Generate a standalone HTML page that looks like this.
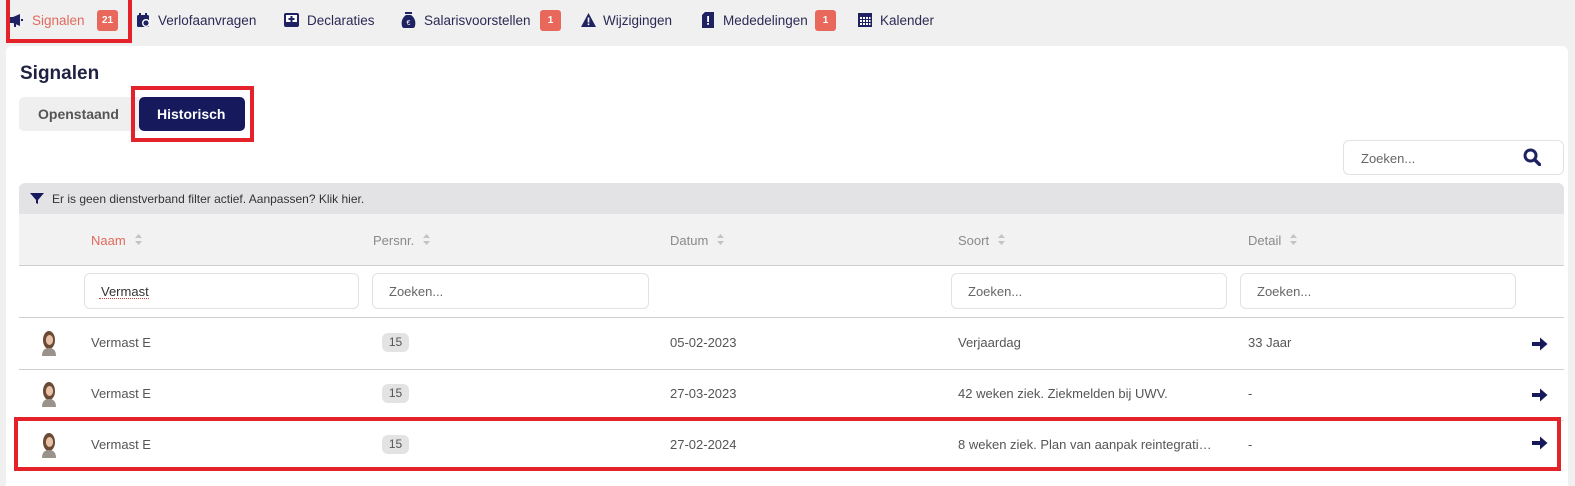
<!DOCTYPE html>
<html><head><meta charset="utf-8">
<style>
*{box-sizing:border-box;margin:0;padding:0}
body{width:1575px;height:478px;background:#f0f0f0;font-family:"Liberation Sans",sans-serif;position:relative;overflow:hidden;color:#555}
.a{position:absolute}
.nav{font-size:13.5px;color:#2a2a55;top:13px;white-space:nowrap}
.badge{position:absolute;top:10px;height:21px;background:#e8685b;color:#fff;font-size:10px;font-weight:bold;border-radius:3px;text-align:center;line-height:21px}
.card{left:6px;top:46px;width:1562px;height:440px;background:#fff;border-radius:6px 6px 0 0}
.th{font-size:13px;color:#8a8a8a;top:233px;white-space:nowrap}
.sort{display:inline-block;margin-left:9px;vertical-align:0px}
.inp{height:36px;top:273px;border:1px solid #e2e2e2;border-radius:6px;font-size:13px;color:#666;padding:10px 0 0 16px}
.row{font-size:13px;color:#555}
.line{height:1px;background:#cfcfcf;left:19px;width:1545px}
.num{width:27px;height:19px;background:#e3e3e3;border-radius:6px;font-size:12px;text-align:center;line-height:19px;color:#555}
.red{border:4px solid #e3222a}
</style></head><body>
<svg width="0" height="0" style="position:absolute"><defs>
<g id="av"><ellipse cx="9" cy="10" rx="6" ry="9" fill="#6b4a36"/><ellipse cx="9.5" cy="10" rx="3.6" ry="5" fill="#e8c2a8"/><path d="M2 26c0-6 3-8 7-8s7 2 7 8z" fill="#9a938c"/></g>
<g id="so"><path d="M3.5 0L7 4H0z" fill="#c4c4c4"/><path d="M3.5 11L7 7H0z" fill="#c4c4c4"/></g>
<g id="ar"><path d="M0 5h8V0.5l7.5 6.5-7.5 6.5V9H0z" fill="#161a5c"/></g>
</defs></svg>
<!-- nav -->
<svg class="a" style="left:10px;top:14px" width="14" height="13" viewBox="0 0 14 13"><path d="M0 3h3v6H0zM3 3l7-3v12L3 9z" fill="#1e2262"/><rect x="4" y="9" width="2" height="4" fill="#1e2262"/><rect x="11" y="5" width="2" height="2" fill="#1e2262"/></svg>
<div class="a nav" style="left:32px;color:#e06a5c">Signalen</div>
<div class="badge" style="left:97px;width:21px">21</div>
<div class="a red" style="left:6px;top:0;width:126px;height:43px;border-top:none"></div>
<svg class="a" style="left:137px;top:13px" width="14" height="15" viewBox="0 0 14 15"><rect x="0" y="2" width="12" height="12" rx="1.5" fill="#1e2262"/><rect x="2" y="0" width="2" height="4" fill="#1e2262"/><rect x="8" y="0" width="2" height="4" fill="#1e2262"/><circle cx="9" cy="10" r="4" fill="#fff"/><circle cx="9" cy="10" r="2.6" fill="#1e2262"/></svg>
<div class="a nav" style="left:158px">Verlofaanvragen</div>
<svg class="a" style="left:284px;top:13px" width="15" height="14" viewBox="0 0 15 14"><rect x="0" y="0" width="15" height="14" rx="2" fill="#1e2262"/><rect x="2" y="2" width="11" height="7" fill="#fff"/><path d="M6.5 3h2v2h2v2h-2v2h-2V7h-2V5h2z" fill="#1e2262"/></svg>
<div class="a nav" style="left:307px">Declaraties</div>
<svg class="a" style="left:401px;top:12px" width="15" height="16" viewBox="0 0 15 16"><rect x="4" y="0" width="7" height="2" fill="#1e2262"/><path d="M5 3h5C14 6 15 10 14 14c0 1-1 2-2 2H3c-1 0-2-1-2-2C0 10 1 6 5 3z" fill="#1e2262"/><text x="7.5" y="13" font-size="7" fill="#fff" text-anchor="middle" font-family="Liberation Sans">€</text></svg>
<div class="a nav" style="left:424px">Salarisvoorstellen</div>
<div class="badge" style="left:540px;width:21px">1</div>
<svg class="a" style="left:581px;top:13px" width="15" height="14" viewBox="0 0 15 14"><path d="M7.5 0L15 14H0z" fill="#1e2262"/><rect x="6.7" y="4.5" width="1.6" height="5" fill="#fff"/><rect x="6.7" y="10.5" width="1.6" height="1.6" fill="#fff"/></svg>
<div class="a nav" style="left:603px">Wijzigingen</div>
<svg class="a" style="left:702px;top:12px" width="12" height="16" viewBox="0 0 12 16"><path d="M3 0h9v16H0V3z" fill="#1e2262"/><rect x="5.2" y="4" width="1.8" height="6" fill="#fff"/><rect x="5.2" y="11" width="1.8" height="1.8" fill="#fff"/></svg>
<div class="a nav" style="left:723px">Mededelingen</div>
<div class="badge" style="left:815px;width:21px">1</div>
<svg class="a" style="left:858px;top:13px" width="14" height="14" viewBox="0 0 14 14"><rect width="14" height="14" fill="#1e2262"/><g fill="#fff"><rect x="2" y="4" width="2" height="2"/><rect x="5" y="4" width="2" height="2"/><rect x="8" y="4" width="2" height="2"/><rect x="11" y="4" width="1.5" height="2"/><rect x="2" y="7" width="2" height="2"/><rect x="5" y="7" width="2" height="2"/><rect x="8" y="7" width="2" height="2"/><rect x="11" y="7" width="1.5" height="2"/><rect x="2" y="10" width="2" height="2"/><rect x="5" y="10" width="2" height="2"/><rect x="8" y="10" width="2" height="2"/><rect x="11" y="10" width="1.5" height="2"/></g></svg>
<div class="a nav" style="left:880px">Kalender</div>

<div class="a card"></div>
<div class="a" style="left:20px;top:63px;font-size:19px;font-weight:bold;color:#1e2240">Signalen</div>
<div class="a" style="left:19px;top:97px;width:120px;height:34px;background:#efefef;border-radius:5px 0 0 5px;font-size:14px;font-weight:bold;color:#555;padding:9px 0 0 19px">Openstaand</div>
<div class="a" style="left:139px;top:97px;width:106px;height:34px;background:#161a5c;border-radius:5px;font-size:14px;font-weight:bold;color:#fff;padding:9px 0 0 18px">Historisch</div>
<div class="a red" style="left:131px;top:86px;width:123px;height:56px"></div>

<div class="a" style="left:1343px;top:140px;width:221px;height:35px;border:1px solid #e2e2e2;border-radius:6px;font-size:13px;color:#666;padding:10px 0 0 17px">Zoeken...</div>
<svg class="a" style="left:1523px;top:148px" width="18" height="18" viewBox="0 0 18 18"><circle cx="7.5" cy="7.5" r="5.5" fill="none" stroke="#1e2262" stroke-width="3"/><path d="M11.5 11.5l5 5" stroke="#1e2262" stroke-width="3.4" stroke-linecap="round"/></svg>

<div class="a" style="left:19px;top:183px;width:1545px;height:31px;background:#e3e3e5;border-radius:6px 6px 0 0"></div>
<svg class="a" style="left:30px;top:193px" width="14" height="11" viewBox="0 0 14 11"><path d="M0 0h14L8 7v4L6 10V7z" fill="#161a5c"/></svg>
<div class="a" style="left:52px;top:192px;font-size:12px;color:#333">Er is geen dienstverband filter actief. Aanpassen? Klik hier.</div>
<div class="a" style="left:19px;top:214px;width:1545px;height:51px;background:#f2f2f2"></div>
<div class="a line" style="top:265px"></div>
<div class="a th" style="left:91px;color:#e06a5c">Naam<svg class="sort" width="7" height="11"><use href="#so"/></svg></div>
<div class="a th" style="left:373px">Persnr.<svg class="sort" width="7" height="11"><use href="#so"/></svg></div>
<div class="a th" style="left:670px">Datum<svg class="sort" width="7" height="11"><use href="#so"/></svg></div>
<div class="a th" style="left:958px">Soort<svg class="sort" width="7" height="11"><use href="#so"/></svg></div>
<div class="a th" style="left:1248px">Detail<svg class="sort" width="7" height="11"><use href="#so"/></svg></div>

<div class="a inp" style="left:84px;width:275px;color:#333">Vermast</div>
<div class="a" style="left:99px;top:298px;width:50px;border-bottom:1px dotted #c44"></div>
<div class="a inp" style="left:372px;width:277px">Zoeken...</div>
<div class="a inp" style="left:951px;width:276px">Zoeken...</div>
<div class="a inp" style="left:1240px;width:276px">Zoeken...</div>
<div class="a line" style="top:317px"></div>
<div class="a line" style="top:369px"></div>
<div class="a line" style="top:420px;background:#ddd"></div>

<svg class="a" style="left:40px;top:330px" width="18" height="27"><use href="#av"/></svg>
<div class="a row" style="left:91px;top:335px">Vermast E</div>
<div class="a num" style="left:382px;top:333px">15</div>
<div class="a row" style="left:670px;top:335px">05-02-2023</div>
<div class="a row" style="left:958px;top:335px">Verjaardag</div>
<div class="a row" style="left:1248px;top:335px">33 Jaar</div>

<svg class="a" style="left:40px;top:381px" width="18" height="27"><use href="#av"/></svg>
<div class="a row" style="left:91px;top:386px">Vermast E</div>
<div class="a num" style="left:382px;top:384px">15</div>
<div class="a row" style="left:670px;top:386px">27-03-2023</div>
<div class="a row" style="left:958px;top:386px">42 weken ziek. Ziekmelden bij UWV.</div>
<div class="a row" style="left:1248px;top:386px">-</div>

<svg class="a" style="left:40px;top:432px" width="18" height="27"><use href="#av"/></svg>
<div class="a row" style="left:91px;top:437px">Vermast E</div>
<div class="a num" style="left:382px;top:435px">15</div>
<div class="a row" style="left:670px;top:437px">27-02-2024</div>
<div class="a row" style="left:958px;top:437px">8 weken ziek. Plan van aanpak reintegrati…</div>
<div class="a row" style="left:1248px;top:437px">-</div>

<svg class="a" style="left:1532px;top:337px" width="16" height="14"><use href="#ar"/></svg>
<svg class="a" style="left:1532px;top:388px" width="16" height="14"><use href="#ar"/></svg>
<svg class="a" style="left:1532px;top:436px" width="16" height="14"><use href="#ar"/></svg>

<div class="a red" style="left:14px;top:417px;width:1547px;height:54px"></div>
</body></html>
